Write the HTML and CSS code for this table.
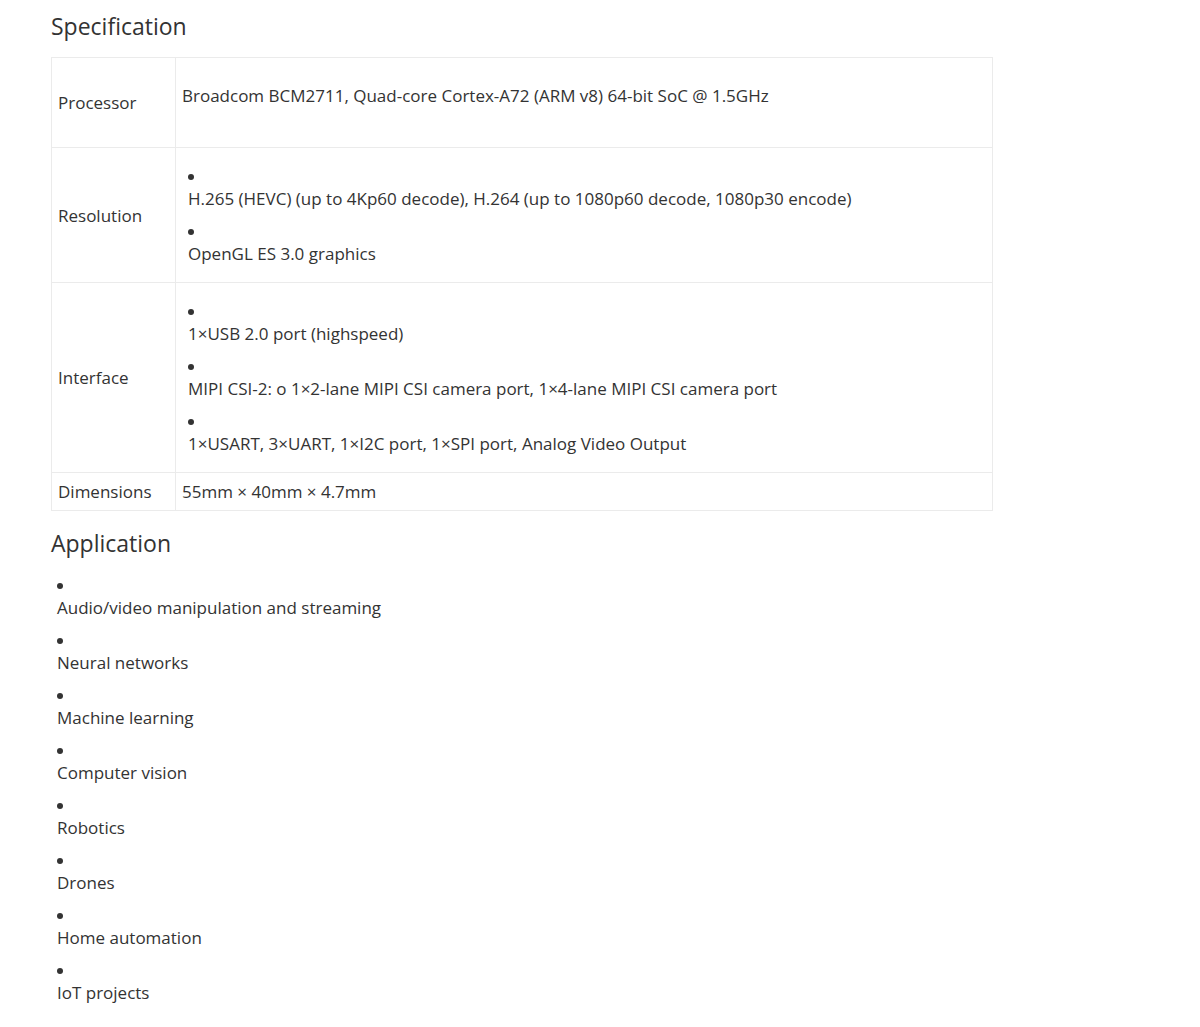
FILE: index.html
```html
<!DOCTYPE html>
<html lang="en">
<head>
  <meta charset="UTF-8" />
  <meta name="viewport" content="width=device-width, initial-scale=1.0" />
  <title>Specification</title>
  <link rel="stylesheet" href="styles.css">
</head>
<body>
  <div class="content">
    <h2>Specification</h2>

    <table class="spec-table">
      <tr>
        <td class="spec-name">Processor</td>
        <td class="spec-value"><p class="single">Broadcom BCM2711, Quad-core Cortex-A72 (ARM v8) 64-bit SoC @ 1.5GHz</p></td>
      </tr>
      <tr>
        <td class="spec-name">Resolution</td>
        <td class="spec-value">
          <ul>
            <li><p>H.265 (HEVC) (up to 4Kp60 decode), H.264 (up to 1080p60 decode, 1080p30 encode)</p></li>
            <li><p>OpenGL ES 3.0 graphics</p></li>
          </ul>
        </td>
      </tr>
      <tr>
        <td class="spec-name">Interface</td>
        <td class="spec-value">
          <ul>
            <li><p>1×USB 2.0 port (highspeed)</p></li>
            <li><p>MIPI CSI-2: o 1×2-lane MIPI CSI camera port, 1×4-lane MIPI CSI camera port</p></li>
            <li><p>1×USART, 3×UART, 1×I2C port, 1×SPI port, Analog Video Output</p></li>
          </ul>
        </td>
      </tr>
      <tr>
        <td class="spec-name">Dimensions</td>
        <td class="spec-value">55mm × 40mm × 4.7mm</td>
      </tr>
    </table>

    <h2 class="app-title">Application</h2>

    <ul class="app-list">
      <li><p>Audio/video manipulation and streaming</p></li>
      <li><p>Neural networks</p></li>
      <li><p>Machine learning</p></li>
      <li><p>Computer vision</p></li>
      <li><p>Robotics</p></li>
      <li><p>Drones</p></li>
      <li><p>Home automation</p></li>
      <li><p>IoT projects</p></li>
    </ul>
  </div>
</body>
</html>
```

FILE: styles.css
```css
* {
  box-sizing: border-box;
}

body {
  margin: 0;
  background: #fff;
  color: #333;
  font-family: 'Open Sans', 'Noto Sans', sans-serif;
  font-size: 17px;
  line-height: 22px;
}

.content {
  padding: 12px 51px 20px;
}

h2 {
  margin: 0 0 16px;
  font-size: 23px;
  line-height: 29px;
  font-weight: 400;
  color: #333;
}

.app-title {
  margin-top: 18px;
}

.spec-table {
  width: 942px;
  border-collapse: collapse;
}

.spec-table td {
  border: 1px solid #ebebeb;
  padding: 8px 6px 7px;
  vertical-align: middle;
}

.spec-name {
  width: 124px;
}

.spec-value p {
  margin: 0 0 11px;
}

.spec-value li:last-child p {
  margin-bottom: 10px;
}

.spec-value .single {
  margin: 19px 0 33px;
}

.spec-value ul {
  margin: 10px 0 0;
  padding-left: 6px;
  list-style: disc inside;
}

.app-list {
  margin: 17px 0 0;
  padding-left: 6px;
  list-style: disc inside;
}

.app-list p {
  margin: 0 0 11px;
}
```
